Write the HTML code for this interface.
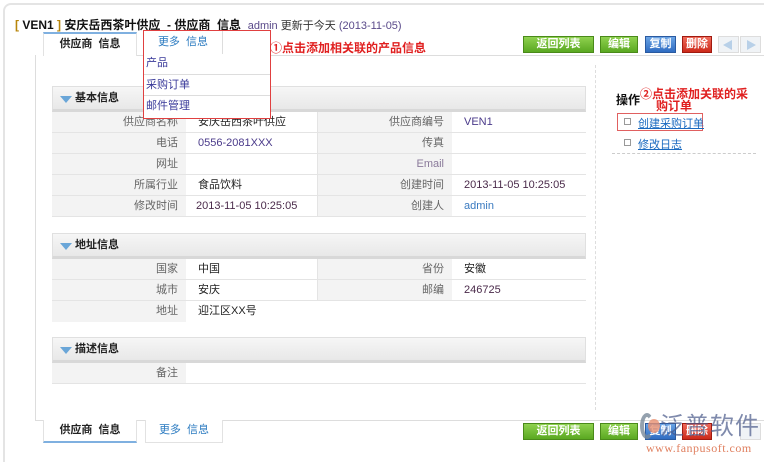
<!DOCTYPE html>
<html style="width:764px;height:462px;overflow:hidden"><head><meta charset="utf-8"><style>
*{margin:0;padding:0;box-sizing:border-box}
body{width:764px;height:462px;background:#fff;position:relative;overflow:hidden;font-family:"Liberation Sans","Noto Sans CJK SC",sans-serif;font-size:11px;color:#333}
.a{position:absolute}
.frame{left:3px;top:3px;width:780px;height:459px;border:2px solid #e4e4e4;border-bottom:none;border-radius:8px 8px 0 0}
.title{left:15px;top:16px;font-size:12px;font-weight:bold;color:#111;white-space:nowrap}
.title .b{color:#b8860b}
.title .s{font-weight:normal;font-size:11px;color:#333}
.title .d{font-weight:normal;font-size:11px;color:#5a4a8a}
.tab{height:23px;border:1px solid #e2e2e2;background:#fff;text-align:center;line-height:21px;font-size:11px}
.btn{height:17px;top:36px;color:#fff;font-weight:bold;font-size:11px;text-align:center;line-height:15px;border:1px solid}
.g{background:linear-gradient(#8fd14f,#5aa821);border-color:#4a8a1a}
.bl{background:linear-gradient(#6aa3e4,#2f6cc2);border-color:#2a5aa0}
.r{background:linear-gradient(#ef6a5a,#cc2a1a);border-color:#a01a10}
.arr{height:17px;width:21px;top:36px;border:1px solid #ddd;background:#f0f3f6}
.hd{height:26px;background:linear-gradient(#f6f6f6,#e8e8e8);border:1px solid #e0e0e0;border-bottom:3px solid #d8d8d8;font-weight:bold;font-size:11px;color:#222;line-height:22px;padding-left:22px}
.hd:before{content:"";position:absolute;left:7px;top:9px;border-left:6px solid transparent;border-right:6px solid transparent;border-top:7px solid #6aa6d8}
.row{height:21px;border-bottom:1px solid #e4e4e4}
.lab{background:#f3f3f3;text-align:right;padding-right:8px;line-height:20px;color:#666}
.val{line-height:20px;padding-left:12px;color:#222}
.red{color:#e02020;font-weight:bold;font-size:12px}
.top{z-index:5}
</style></head><body>
<div class="a frame"></div>
<div class="a title"><span class="b">[ </span>VEN1<span class="b"> ]</span> 安庆岳西茶叶供应 &nbsp;- 供应商 &nbsp;信息 &nbsp;<span class="s"><span style="color:#5a4a8a">admin</span> 更新于今天 </span><span class="d">(2013-11-05)</span></div>

<div class="a" style="left:136px;top:55px;width:630px;height:1px;background:#ddd"></div>
<div class="a" style="left:35px;top:55px;width:1px;height:365px;background:#ddd"></div>
<div class="a" style="left:35px;top:420px;width:730px;height:1px;background:#ddd"></div>
<div class="a tab" style="left:43px;top:32px;width:94px;border-top:2px solid #7fb0e0;border-bottom:none;font-weight:bold;color:#222;height:24px">供应商 &nbsp;信息</div>

<div class="a hd" style="left:52px;top:86px;width:534px">基本信息</div>
<div class="a" style="left:52px;top:112px;width:534px">
 <div class="row" style="display:flex"><div class="lab" style="width:134px">供应商名称</div><div class="val" style="width:132px;border-right:1px solid #e4e4e4">安庆岳西茶叶供应</div><div class="lab" style="width:134px">供应商编号</div><div class="val" style="color:#4a3a8a">VEN1</div></div>
 <div class="row" style="display:flex"><div class="lab" style="width:134px">电话</div><div class="val" style="width:132px;border-right:1px solid #e4e4e4;color:#4a3a8a">0556-2081XXX</div><div class="lab" style="width:134px">传真</div><div class="val"></div></div>
 <div class="row" style="display:flex"><div class="lab" style="width:134px">网址</div><div class="val" style="width:132px;border-right:1px solid #e4e4e4"></div><div class="lab" style="width:134px;color:#8a7a9a">Email</div><div class="val"></div></div>
 <div class="row" style="display:flex"><div class="lab" style="width:134px">所属行业</div><div class="val" style="width:132px;border-right:1px solid #e4e4e4">食品饮料</div><div class="lab" style="width:134px">创建时间</div><div class="val" style="color:#4a2a4a">2013-11-05 10:25:05</div></div>
 <div class="row" style="display:flex"><div class="lab" style="width:134px">修改时间</div><div class="val" style="width:132px;border-right:1px solid #e4e4e4;padding-left:10px;color:#4a2a4a">2013-11-05 10:25:05</div><div class="lab" style="width:134px">创建人</div><div class="val" style="color:#3a7ac0">admin</div></div>
</div>

<div class="a top" style="left:143px;top:30px;width:128px;height:89px;border:1px solid #e04040;background:#fff">
 <div class="a" style="left:0;top:0;width:79px;height:23px;border-right:1px solid #ddd;text-align:center;line-height:23px;color:#2a7ac0">更多 &nbsp;信息</div>
 <div class="a" style="left:2px;top:25px;color:#3a3a9a;line-height:14px">产品</div>
 <div class="a" style="left:0;top:43px;width:126px;height:1px;background:#ddd"></div>
 <div class="a" style="left:2px;top:47px;color:#3a3a9a;line-height:14px">采购订单</div>
 <div class="a" style="left:0;top:64px;width:126px;height:1px;background:#ddd"></div>
 <div class="a" style="left:2px;top:68px;color:#3a3a9a;line-height:14px">邮件管理</div>
</div>
<div class="a red top" style="left:270px;top:39px">①点击添加相关联的产品信息</div>

<div class="a btn g" style="left:523px;width:71px">返回列表</div>
<div class="a btn g" style="left:600px;width:38px">编辑</div>
<div class="a btn bl" style="left:645px;width:31px">复制</div>
<div class="a btn r" style="left:682px;width:30px">删除</div>
<div class="a arr" style="left:718px"><div class="a" style="left:4px;top:3px;border-top:5px solid transparent;border-bottom:5px solid transparent;border-right:9px solid #b8d0e8"></div></div>
<div class="a arr" style="left:740px"><div class="a" style="left:6px;top:3px;border-top:5px solid transparent;border-bottom:5px solid transparent;border-left:9px solid #b8d0e8"></div></div>

<div class="a" style="left:595px;top:65px;width:0;height:345px;border-left:1px dashed #ddd"></div>

<div class="a hd" style="left:52px;top:233px;width:534px">地址信息</div>
<div class="a" style="left:52px;top:259px;width:534px">
 <div class="row" style="display:flex"><div class="lab" style="width:134px">国家</div><div class="val" style="width:132px;border-right:1px solid #e4e4e4">中国</div><div class="lab" style="width:134px">省份</div><div class="val">安徽</div></div>
 <div class="row" style="display:flex"><div class="lab" style="width:134px">城市</div><div class="val" style="width:132px;border-right:1px solid #e4e4e4">安庆</div><div class="lab" style="width:134px">邮编</div><div class="val" style="color:#4a2a4a">246725</div></div>
 <div class="row" style="display:flex;width:266px;border-bottom:none"><div class="lab" style="width:134px">地址</div><div class="val" style="width:132px">迎江区XX号</div></div>
</div>

<div class="a hd" style="left:52px;top:337px;width:534px">描述信息</div>
<div class="a" style="left:52px;top:363px;width:534px">
 <div class="row" style="display:flex"><div class="lab" style="width:134px">备注</div><div class="val"></div></div>
</div>

<div class="a" style="left:616px;top:91px;font-weight:bold;font-size:12px;color:#111">操作</div>
<div class="a red" style="left:640px;top:88px;line-height:12px;width:124px;white-space:nowrap">②点击添加关联的采<br><span style="padding-left:16px">购订单</span></div>
<div class="a" style="left:617px;top:113px;width:86px;height:18px;border:1px solid #e06060"></div>
<div class="a" style="left:624px;top:118px;width:7px;height:7px;border:1px solid #999"></div>
<div class="a" style="left:638px;top:115px;color:#1a6ac0;text-decoration:underline">创建采购订单</div>
<div class="a" style="left:624px;top:139px;width:7px;height:7px;border:1px solid #999"></div>
<div class="a" style="left:638px;top:136px;color:#1a6ac0;text-decoration:underline">修改日志</div>
<div class="a" style="left:612px;top:153px;width:144px;border-top:1px dashed #ccc"></div>

<div class="a tab" style="left:43px;top:420px;width:94px;border-top:none;border-bottom:2px solid #7fb0e0;font-weight:bold;color:#222">供应商 &nbsp;信息</div>
<div class="a tab" style="left:145px;top:420px;width:78px;border-top:none;color:#2a7ac0">更多 &nbsp;信息</div>
<div class="a btn g" style="left:523px;top:423px;width:71px">返回列表</div>
<div class="a btn g" style="left:600px;top:423px;width:38px">编辑</div>
<div class="a btn bl" style="left:645px;top:423px;width:31px">复制</div>
<div class="a btn r" style="left:682px;top:423px;width:30px">删除</div>
<div class="a" style="left:740px;top:423px;width:21px;height:17px;border:1px solid #ddd;background:#f0f3f6"></div>
<div class="a" style="left:640px;top:413px;width:14px;height:26px;border-radius:50%;border:4px solid #7a8a9a;border-right-color:transparent;opacity:.8"></div>
<div class="a" style="left:648px;top:419px;width:12px;height:14px;border-radius:50%;background:#e89070;opacity:.8"></div>
<div class="a" style="left:660px;top:410px;font-size:24px;color:#4a5a8a;opacity:.7;letter-spacing:1px;line-height:28px;white-space:nowrap;font-family:'Noto Sans CJK SC',sans-serif">泛普软件</div>
<div class="a" style="left:646px;top:441px;font-size:12px;color:#e08060;font-family:'Liberation Serif',serif;letter-spacing:.5px;white-space:nowrap">www.fanpusoft.com</div>
</body></html>
